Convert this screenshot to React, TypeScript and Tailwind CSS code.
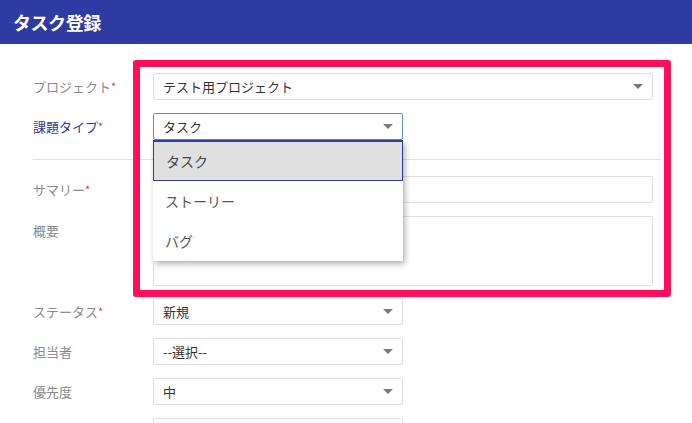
import React from "react";

const font = { fontFamily: '"Noto Sans CJK JP", "Noto Sans", sans-serif' };

function Caret() {
  return (
    <svg width="10" height="5" viewBox="0 0 10 5" className="shrink-0">
      <path d="M0 0 L10 0 L5 5 Z" fill="#7a7a7a" />
    </svg>
  );
}

function Label({ text, req, active }: { text: string; req?: boolean; active?: boolean }) {
  return (
    <div className={`w-[120px] shrink-0 text-[13px] ${active ? "text-[#2d3ba3]" : "text-[#8a8a8a]"}`}>
      {text}
      {req && <span className="text-[#e8334a] text-[11px] relative -top-[1px]">*</span>}
    </div>
  );
}

function Select({ value, wide, focus }: { value: string; wide?: boolean; focus?: boolean }) {
  return (
    <div
      className={`h-[27px] ${wide ? "w-[500px]" : "w-[250px]"} flex items-center justify-between pl-[9px] pr-[9px] rounded-[2px] border bg-white ${
        focus ? "border-[#5b8fd6]" : "border-[#e0e0e0]"
      }`}
    >
      <span className="text-[13px] text-[#333]">{value}</span>
      <Caret />
    </div>
  );
}

export default function App() {
  return (
    <div className="relative w-[692px] h-[423px] overflow-hidden bg-white" style={font}>
      <div className="h-[44px] bg-[#2d3ba3] flex items-center pl-[13px]">
        <span className="text-white font-bold text-[18px] tracking-tight">タスク登録</span>
      </div>

      <div className="pl-[33px] pt-[29px]">
        <div className="flex items-center h-[27px]">
          <Label text="プロジェクト" req />
          <Select value="テスト用プロジェクト" wide />
        </div>
        <div className="flex items-center h-[27px] mt-[13px]">
          <Label text="課題タイプ" req active />
          <div className="relative">
            <Select value="タスク" focus />
            <div className="absolute left-0 top-[27px] w-[250px] bg-white shadow-[2px_3px_6px_rgba(0,0,0,0.3)] z-10">
              <div className="h-[41px] flex items-center pl-[12px] bg-[#e0e0e0] border border-t-2 border-[#2d3ba3] text-[14px] text-[#444]">
                タスク
              </div>
              <div className="h-[40px] flex items-center pl-[12px] text-[14px] text-[#555]">ストーリー</div>
              <div className="h-[40px] flex items-center pl-[12px] text-[14px] text-[#555]">バグ</div>
            </div>
          </div>
        </div>

        <div className="w-[628px] h-px bg-[#e3e3e3] mt-[19px]" />

        <div className="flex items-center h-[27px] mt-[16px]">
          <Label text="サマリー" req />
          <div className="h-[27px] w-[500px] rounded-[2px] border border-[#e0e0e0]" />
        </div>
        <div className="flex items-start mt-[13px]">
          <div className="pt-[5px]">
            <Label text="概要" />
          </div>
          <div className="h-[70px] w-[500px] rounded-[2px] border border-[#e0e0e0]" />
        </div>

        <div className="flex items-center h-[27px] mt-[12px]">
          <Label text="ステータス" req />
          <Select value="新規" />
        </div>
        <div className="flex items-center h-[27px] mt-[13px]">
          <Label text="担当者" />
          <Select value="--選択--" />
        </div>
        <div className="flex items-center h-[27px] mt-[13px]">
          <Label text="優先度" />
          <Select value="中" />
        </div>
        <div className="flex items-center h-[27px] mt-[13px]">
          <Label text="" />
          <div className="h-[27px] w-[250px] rounded-[2px] border border-[#e0e0e0]" />
        </div>
      </div>

      <div className="absolute left-[133px] top-[60px] w-[538px] h-[237px] border-[7px] border-[#ff0e5a] rounded-[3px] pointer-events-none z-20" />
    </div>
  );
}
